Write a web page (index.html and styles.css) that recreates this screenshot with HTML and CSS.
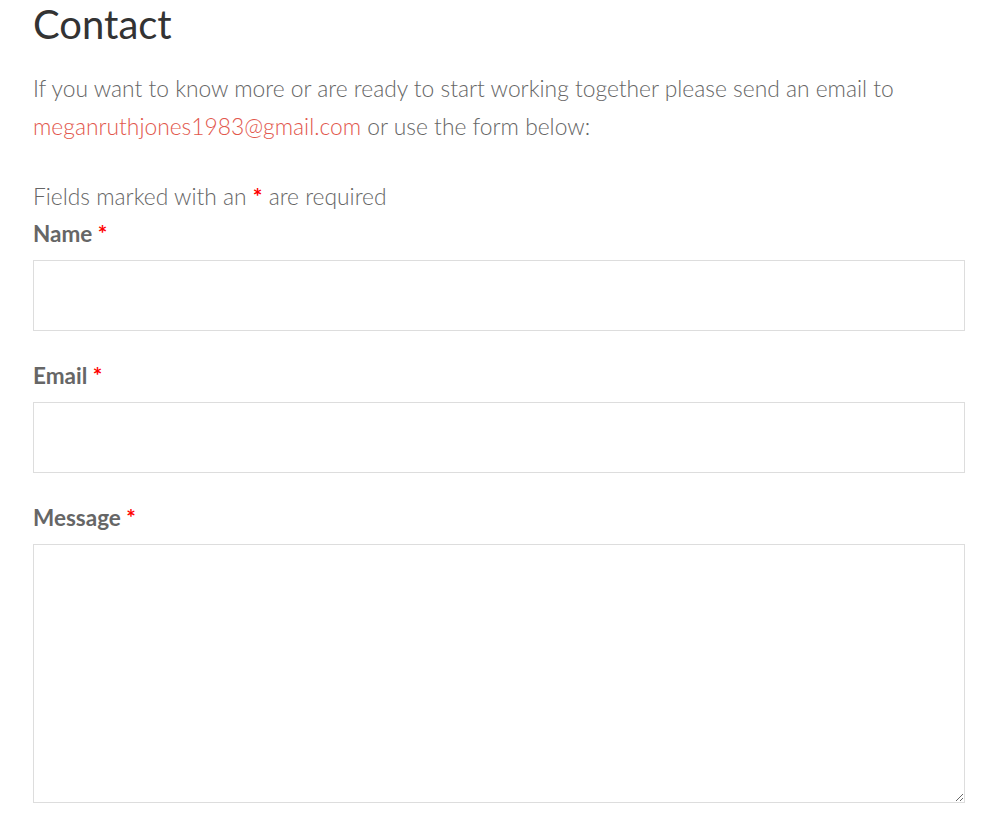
FILE: index.html
```html
<!DOCTYPE html>
<html lang="en">
<head>
<meta charset="utf-8">
<title>Contact</title>
<link rel="stylesheet" href="styles.css">
</head>
<body>
<main class="page">
  <h1 class="title">Contact</h1>
  <p class="intro">If you want to know more or are ready to start working together please send an email to <a class="mail" href="#">meganruthjones1983@gmail.com</a> or use the form below:</p>
  <form class="form">
    <p class="note">Fields marked with an <span class="req">*</span> are required</p>
    <label class="label" for="name">Name <span class="req">*</span></label>
    <input class="field" id="name" type="text">
    <label class="label" for="email">Email <span class="req">*</span></label>
    <input class="field" id="email" type="email">
    <label class="label" for="msg">Message <span class="req">*</span></label>
    <textarea class="field area" id="msg"></textarea>
  </form>
</main>
</body>
</html>
```
FILE: styles.css
```css
html, body {
  margin: 0;
  padding: 0;
  background: #fff;
}
body {
  font-family: Lato, "Open Sans", sans-serif;
  color: #666;
}
.page {
  width: 932px;
  padding-left: 33px;
}
.title {
  margin: 0;
  font-family: Lato, sans-serif;
  font-weight: 400;
  font-size: 40px;
  line-height: 48px;
  color: #333;
}
.intro {
  margin: 21px 0 32px;
  font-size: 22.8px;
  font-weight: 300;
  line-height: 38px;
}
.mail {
  color: #e2574c;
  text-decoration: none;
}
.form {
  display: flex;
  flex-direction: column;
}
.note {
  margin: 0;
  font-size: 22.8px;
  font-weight: 300;
  line-height: 38px;
}
.req {
  color: #f00;
  font-weight: 700;
}
.label {
  font-size: 22.5px;
  font-weight: 700;
  line-height: 38px;
  color: #666;
}
.field {
  box-sizing: border-box;
  width: 932px;
  height: 71px;
  margin: 7px 0 26px;
  border: 1px solid #ddd;
  background: #fff;
  font: inherit;
  padding: 8px;
}
.area {
  height: 259px;
  margin-bottom: 0;
  resize: vertical;
}
```
